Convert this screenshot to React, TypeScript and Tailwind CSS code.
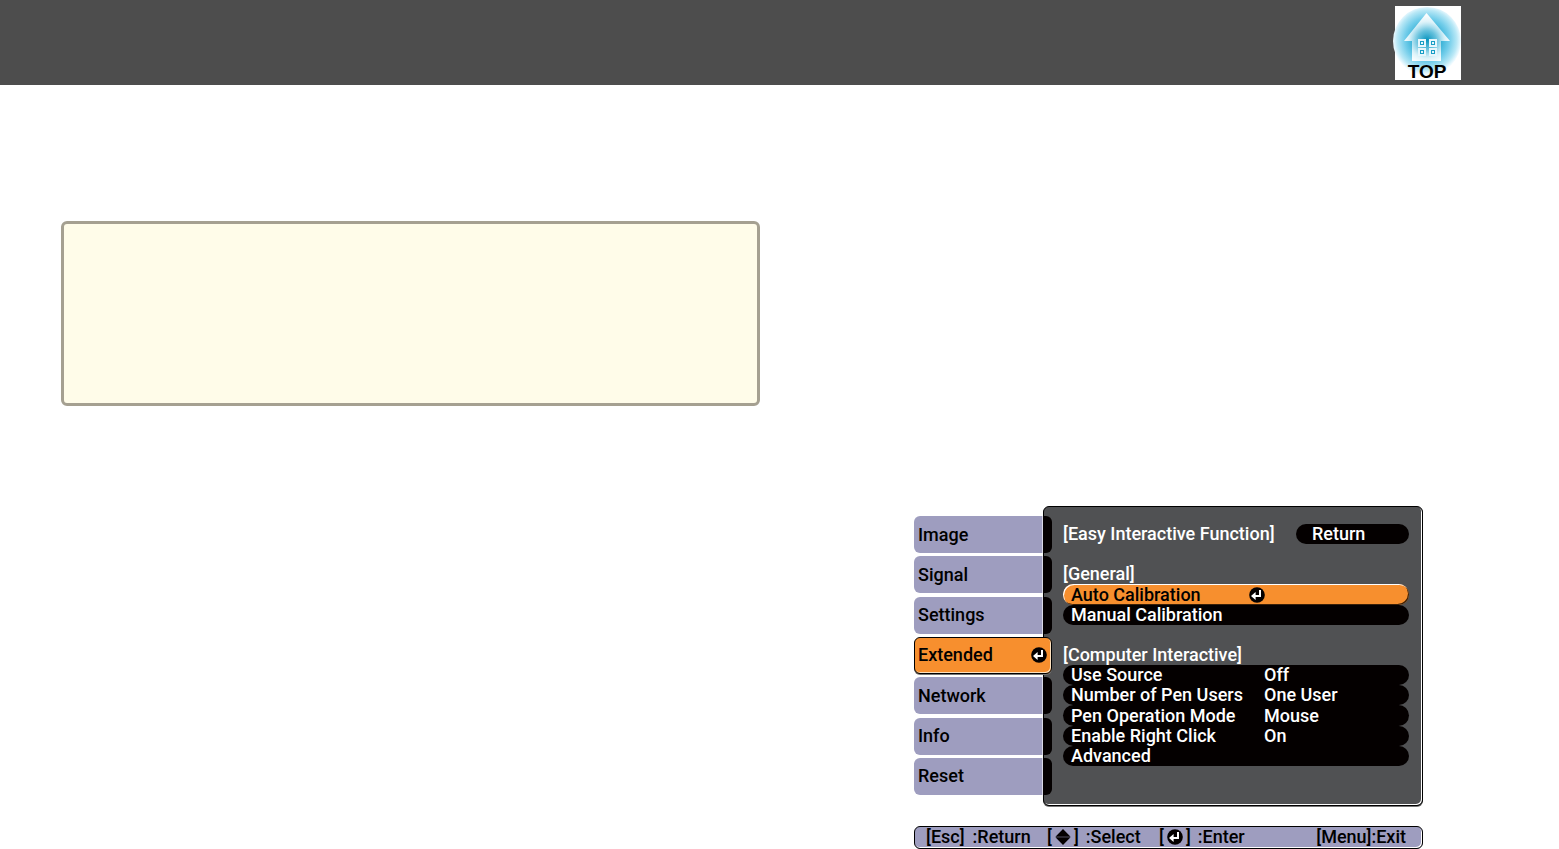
import clsx from "clsx";

const tabs = ["Image", "Signal", "Settings", "Extended", "Network", "Info", "Reset"];

const settings = [
  { label: "Use Source", value: "Off" },
  { label: "Number of Pen Users", value: "One User" },
  { label: "Pen Operation Mode", value: "Mouse" },
  { label: "Enable Right Click", value: "On" },
  { label: "Advanced", value: "" },
];

function EnterIcon() {
  return (
    <svg viewBox="0 0 16 16" className="size-4 shrink-0" aria-hidden="true">
      <circle cx="8" cy="8" r="7.8" fill="#040000" />
      <path d="M11 3v6H5" fill="none" stroke="#fff" strokeWidth="2" />
      <path d="M2 9 6.600 5v8z" fill="#fff" />
    </svg>
  );
}

function UpDownIcon() {
  return (
    <svg viewBox="0 0 16 16" className="size-4 shrink-0" aria-hidden="true">
      <path d="M8 0l7.600 7.800H.4zM8 16l7.600-7.800H.4z" fill="#040000" />
    </svg>
  );
}

function HomeIcon() {
  return (
    <svg viewBox="0 0 66 74" className="h-[74px] w-[66px] overflow-visible" aria-hidden="true">
      <defs>
        <radialGradient id="glow" gradientUnits="userSpaceOnUse" cx="32" cy="34" r="34">
          <stop offset="0" stopColor="#0793bd" />
          <stop offset="0.35" stopColor="#2aabd2" />
          <stop offset="0.65" stopColor="#72cdea" />
          <stop offset="0.88" stopColor="#b9e8f6" />
          <stop offset="1" stopColor="#eefaff" />
        </radialGradient>
        <radialGradient id="house" gradientUnits="userSpaceOnUse" cx="32" cy="34" r="26">
          <stop offset="0" stopColor="#fff" stopOpacity="0" />
          <stop offset="0.35" stopColor="#fff" stopOpacity="0.3" />
          <stop offset="0.7" stopColor="#fff" stopOpacity="0.8" />
          <stop offset="1" stopColor="#fff" />
        </radialGradient>
      </defs>
      <circle cx="32" cy="35" r="34" fill="url(#glow)" />
      <path d="M31.500 7L9 35h8v20h29V35h9z" fill="url(#house)" />
      <g fill="#189dc5" stroke="#e6f6fc" strokeWidth="2">
        <rect x="24" y="34" width="6" height="6" />
        <rect x="35" y="34" width="6" height="6" />
        <rect x="24" y="43" width="6" height="6" />
        <rect x="35" y="43" width="6" height="6" />
      </g>
      <path d="M26 36h2v2h-2zM37 36h2v2h-2zM26 45h2v2h-2zM37 45h2v2h-2z" fill="#e6f6fc" />
    </svg>
  );
}

function Tab({ label, active }: { label: string; active: boolean }) {
  if (active) {
    return (
      <button
        aria-current="page"
        className="flex h-[37px] items-center justify-between rounded-md border border-black bg-[#f78f2e] pr-1 pl-[3px] shadow-[inset_-1px_-1px_0_#fde0bd,0_1px_0_#777]"
      >
        {label}
        <EnterIcon />
      </button>
    );
  }
  return (
    <button className="flex h-[37px] items-stretch text-left">
      <span className="flex grow items-center rounded-l-md border-r border-[#d8d8e6] bg-[#9e9dbf] pl-1">{label}</span>
      <span className="w-[9px] rounded-r-md bg-[#040000]" />
    </button>
  );
}

function Row({ label, value, active }: { label: string; value?: string; active?: boolean }) {
  return (
    <button
      className={clsx(
        "flex items-center rounded-full pl-2 text-left",
        active
          ? "bg-[#f78f2e] text-black shadow-[inset_1px_1px_0_#fff,inset_-1px_-1px_0_#3a2008]"
          : "bg-[#040000] text-white"
      )}
    >
      <span className={active ? "w-[178px]" : "w-[193px]"}>{label}</span>
      {active ? <EnterIcon /> : <span>{value}</span>}
    </button>
  );
}

function MenuPanel() {
  return (
    <section className="-ml-[9px] grow rounded-md border border-black bg-[#505153] pt-[17px] pr-[13px] pb-[39px] pl-[19px] text-white shadow-[inset_-1px_-1px_0_#fff,0_1px_0_#777]">
      <div className="grid h-[242px] grid-rows-12">
        <div className="flex items-stretch justify-between">
          <h2 className="self-center">[Easy Interactive Function]</h2>
          <button className="w-[113px] rounded-full bg-[#040000] pl-4 text-left">Return</button>
        </div>
        <div className="row-span-3 row-start-3 grid grid-rows-subgrid">
          <h3>[General]</h3>
          <Row label="Auto Calibration" active />
          <Row label="Manual Calibration" />
        </div>
        <div className="row-span-6 row-start-7 grid grid-rows-subgrid">
          <h3>[Computer Interactive]</h3>
          {settings.map((item) => (
            <Row key={item.label} label={item.label} value={item.value} />
          ))}
        </div>
      </div>
    </section>
  );
}

function KeyGuide() {
  return (
    <footer className="mt-5 flex h-[23px] items-center rounded-md border border-black bg-[#9e9dbf] pr-4 pb-0.5 pl-[11px] shadow-[inset_-1px_-1px_0_#fff]">
      <span className="flex w-[121px] gap-2">
        <span>[Esc]</span>
        <span>:Return</span>
      </span>
      <span className="flex w-[112px] items-center gap-[3px]">
        <span>[</span>
        <UpDownIcon />
        <span>]</span>
        <span className="pl-1">:Select</span>
      </span>
      <span className="flex items-center gap-[3px]">
        <span>[</span>
        <EnterIcon />
        <span>]</span>
        <span className="pl-1">:Enter</span>
      </span>
      <span className="ml-auto">[Menu]:Exit</span>
    </footer>
  );
}

export default function App() {
  return (
    <div className="bg-white font-['Roboto','Liberation_Sans',sans-serif]">
      <header className="flex h-[85px] items-start justify-end bg-[#4d4d4d] pt-1.5 pr-[98px]">
        <a href="#top" className="relative bg-white">
          <HomeIcon />
          <span className="absolute inset-x-0 bottom-0 pr-0.5 text-center font-['Liberation_Sans',sans-serif] text-[19px] leading-4 font-bold text-black">
            TOP
          </span>
        </a>
      </header>
      <main className="grid grid-cols-2 items-start gap-10 pr-[60px] pl-[61px]">
        <aside className="mt-[136px] h-[185px] rounded-md border-3 border-[#a5a091] bg-[#fffce9]" />
        <div className="mt-[421px] pl-[114px] text-lg leading-5 font-medium text-black">
          <div className="w-full max-w-[509px]">
            <div className="flex items-start">
              <nav className="relative z-10 mt-2.5 flex h-[279px] w-[138px] shrink-0 flex-col justify-between">
                {tabs.map((tab) => (
                  <Tab key={tab} label={tab} active={tab === "Extended"} />
                ))}
              </nav>
              <MenuPanel />
            </div>
            <KeyGuide />
          </div>
        </div>
      </main>
    </div>
  );
}
